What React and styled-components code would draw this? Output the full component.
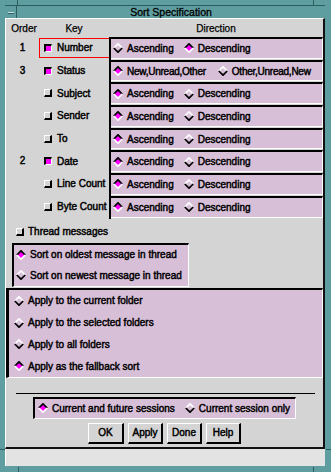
import React from "react";
import styled, { createGlobalStyle } from "styled-components";

const GlobalStyle = createGlobalStyle`
  html, body {
    margin: 0;
    padding: 0;
    background: #5f9ea0;
  }
  body {
    font-family: "Liberation Sans", Arial, sans-serif;
    font-weight: normal;
    font-size: 10px;
    color: #000;
    -webkit-text-stroke: 0.45px #000;
  }
`;

const Frame = styled.div`
  position: relative;
  width: 331px;
  height: 472px;
  box-sizing: border-box;
  padding: 0 6px 6px 5px;
  background: #5f9ea0;
  display: flex;
  flex-direction: column;
`;

const Tick = styled.div`
  position: absolute;
  background: #2c5e5f;
  width: ${(p) => (p.h ? "5px" : "1px")};
  height: ${(p) => (p.h ? "1px" : "5px")};
`;

const TitleBar = styled.div`
  margin-top: 5px;
  height: 12px;
  border-top: 1px solid #2c5e5f;
  display: flex;
`;

const MenuButton = styled.div`
  width: 11px;
  border-right: 1px solid #2c5e5f;
  display: flex;
  align-items: center;
  justify-content: center;

  &::before {
    content: "";
    width: 6px;
    height: 1px;
    background: #cfe3e3;
    box-shadow: 0 1px 0 #2c5e5f;
  }
`;

const Title = styled.div`
  flex: 1;
  text-align: center;
  line-height: 12px;
  font-size: 10.5px;
  -webkit-text-stroke: 0.3px #000;
`;

const Form = styled.div`
  flex: 0 0 431px;
  box-sizing: border-box;
  background: #d4d4d4;
  border-top: 1px solid #fff;
  border-left: 1px solid #fff;
  border-right: 2px solid #111;
  border-bottom: 2px solid #111;
  display: flex;
  flex-direction: column;
`;

const StatusStrip = styled.div`
  flex: 0 0 17px;
  background: #e3e3e3;
  border-left: 1px solid #fff;
`;

const Grid = styled.div`
  display: grid;
  grid-template-columns: 33px 70px 1fr;
  height: ${(p) => p.height || 22.7}px;
  align-items: stretch;
`;

const HeadCell = styled.div`
  display: flex;
  align-items: center;
  justify-content: center;
  padding-left: ${(p) => p.shift || 0}px;
  -webkit-text-stroke: 0.25px #000;
`;

const OrderCell = styled.div`
  display: flex;
  align-items: center;
  justify-content: center;
  padding-bottom: 2px;
`;

const KeyCell = styled.div`
  display: flex;
  align-items: center;
  gap: 5px;
  margin: 1px 0 2px;
  padding-left: 4px;
  border: 1px solid ${(p) => (p.focused ? "#ff0000" : "transparent")};
  border-right: none;
  white-space: nowrap;
`;

const DirCell = styled.div`
  border-left: 2px solid #000;
  padding-bottom: 1px;
  display: flex;
`;

const DirPanel = styled.div`
  flex: 1;
  background: #d8bfd8;
  border-top: 2px solid #000;
  border-bottom: 1px solid #fff;
  border-right: 1px solid #fff;
  display: flex;
  align-items: center;
  gap: ${(p) => (p.tight ? 12 : 10)}px;
  padding-left: 2px;
  letter-spacing: ${(p) => (p.tight ? "-0.25px" : "0")};
  overflow: hidden;
`;

const Option = styled.label`
  display: flex;
  align-items: center;
  gap: 4px;
  white-space: nowrap;
`;

const Check = styled.span`
  box-sizing: border-box;
  width: 8px;
  height: 8px;
  flex: 0 0 8px;
  background: ${(p) => (p.on ? "#ff00ff" : "#d4d4d4")};
  border-style: solid;
  border-width: ${(p) => (p.on ? "2px 1px 1px 2px" : "1px 2px 2px 1px")};
  border-color: ${(p) =>
    p.on ? "#000 #fff #fff #000" : "#fff #000 #000 #fff"};
`;

const RadioSvg = styled.svg`
  flex: 0 0 10px;
  display: block;
`;

const Radio = ({ on }) => (
  <RadioSvg width="10" height="10" viewBox="0 0 10 10">
    <polygon points="5,1 9,5 5,9 1,5" fill={on ? "#ff00ff" : "none"} />
    <polyline
      points="0.8,5 5,0.8 9.2,5"
      fill="none"
      stroke={on ? "#000" : "#fff"}
      strokeWidth="1.7"
    />
    <polyline
      points="0.8,5 5,9.2 9.2,5"
      fill="none"
      stroke={on ? "#fff" : "#000"}
      strokeWidth="1.7"
    />
  </RadioSvg>
);

const ToggleRow = styled.div`
  box-sizing: border-box;
  height: 24.4px;
  padding: 2px 0 0 10px;
  display: flex;
  align-items: center;
  gap: 4px;
`;

const SunkenBox = styled.div`
  box-sizing: border-box;
  background: #d8bfd8;
  border-top: 2px solid #000;
  border-left: 2px solid #000;
  border-bottom: 1px solid #fff;
  border-right: 1px solid #fff;
  display: flex;
`;

const ThreadBox = styled(SunkenBox)`
  width: 177px;
  height: 44px;
  margin-left: 6px;
  flex-direction: column;
  padding-left: 2px;
`;

const ApplyBox = styled(SunkenBox)`
  height: 90px;
  margin-top: 1px;
  flex-direction: column;
  padding-left: 5px;
  border-left-width: 3px;
`;

const StackOption = styled(Option)`
  height: ${(p) => p.rowHeight}px;
`;

const Separator = styled.div`
  height: 1px;
  background: #000;
  margin: 15px 8px 0 10px;
`;

const SessionBox = styled(SunkenBox)`
  align-self: center;
  width: 263px;
  height: 22px;
  margin-top: 3px;
  align-items: center;
  gap: 10px;
  padding-left: 3px;
`;

const ButtonRow = styled.div`
  display: flex;
  justify-content: center;
  gap: 4px;
  margin-top: 4px;
`;

const Button = styled.button`
  box-sizing: border-box;
  width: ${(p) => p.width || 35}px;
  height: 21px;
  padding: 0;
  font: inherit;
  color: #000;
  background: #d4d4d4;
  border-style: solid;
  border-width: 1px 2px 2px 1px;
  border-color: #fff #000 #000 #fff;
  border-radius: 0;
`;

const sortKeys = [
  { order: "1", key: "Number", on: true, focused: true, opts: ["Ascending", "Descending"], sel: 1 },
  { order: "3", key: "Status", on: true, tight: true, opts: ["New,Unread,Other", "Other,Unread,New"], sel: 0 },
  { order: "", key: "Subject", opts: ["Ascending", "Descending"], sel: 0 },
  { order: "", key: "Sender", opts: ["Ascending", "Descending"], sel: 0 },
  { order: "", key: "To", opts: ["Ascending", "Descending"], sel: 0 },
  { order: "2", key: "Date", on: true, opts: ["Ascending", "Descending"], sel: 0 },
  { order: "", key: "Line Count", opts: ["Ascending", "Descending"], sel: 0 },
  { order: "", key: "Byte Count", opts: ["Ascending", "Descending"], sel: 0 },
];

const applyOpts = [
  "Apply to the current folder",
  "Apply to the selected folders",
  "Apply to all folders",
  "Apply as the fallback sort",
];

export default function App() {
  return (
    <>
      <GlobalStyle />
      <Frame>
        <Tick style={{ left: 17, top: 0 }} />
        <Tick style={{ left: 313, top: 0 }} />
        <Tick style={{ left: 18, top: 467 }} />
        <Tick style={{ left: 313, top: 467 }} />
        <Tick h style={{ left: 0, top: 449 }} />
        <Tick h style={{ left: 326, top: 449 }} />

        <TitleBar>
          <MenuButton />
          <Title>Sort Specification</Title>
        </TitleBar>

        <Form>
          <Grid height={18}>
            <HeadCell shift={3}>Order</HeadCell>
            <HeadCell>Key</HeadCell>
            <HeadCell>Direction</HeadCell>
          </Grid>

          {sortKeys.map((k) => (
            <Grid key={k.key}>
              <OrderCell>{k.order}</OrderCell>
              <KeyCell focused={k.focused}>
                <Check on={k.on} />
                {k.key}
              </KeyCell>
              <DirCell>
                <DirPanel tight={k.tight}>
                  {k.opts.map((o, i) => (
                    <Option key={o}>
                      <Radio on={k.sel === i} />
                      {o}
                    </Option>
                  ))}
                </DirPanel>
              </DirCell>
            </Grid>
          ))}

          <ToggleRow>
            <Check />
            Thread messages
          </ToggleRow>

          <ThreadBox>
            <StackOption rowHeight={20}>
              <Radio on />
              Sort on oldest message in thread
            </StackOption>
            <StackOption rowHeight={21}>
              <Radio />
              Sort on newest message in thread
            </StackOption>
          </ThreadBox>

          <ApplyBox>
            {applyOpts.map((o, i) => (
              <StackOption key={o} rowHeight={22}>
                <Radio on={i === 3} />
                {o}
              </StackOption>
            ))}
          </ApplyBox>

          <Separator />

          <SessionBox>
            <Option>
              <Radio on />
              Current and future sessions
            </Option>
            <Option>
              <Radio />
              Current session only
            </Option>
          </SessionBox>

          <ButtonRow>
            <Button width={36}>OK</Button>
            <Button>Apply</Button>
            <Button>Done</Button>
            <Button>Help</Button>
          </ButtonRow>
        </Form>
        <StatusStrip />
      </Frame>
    </>
  );
}
